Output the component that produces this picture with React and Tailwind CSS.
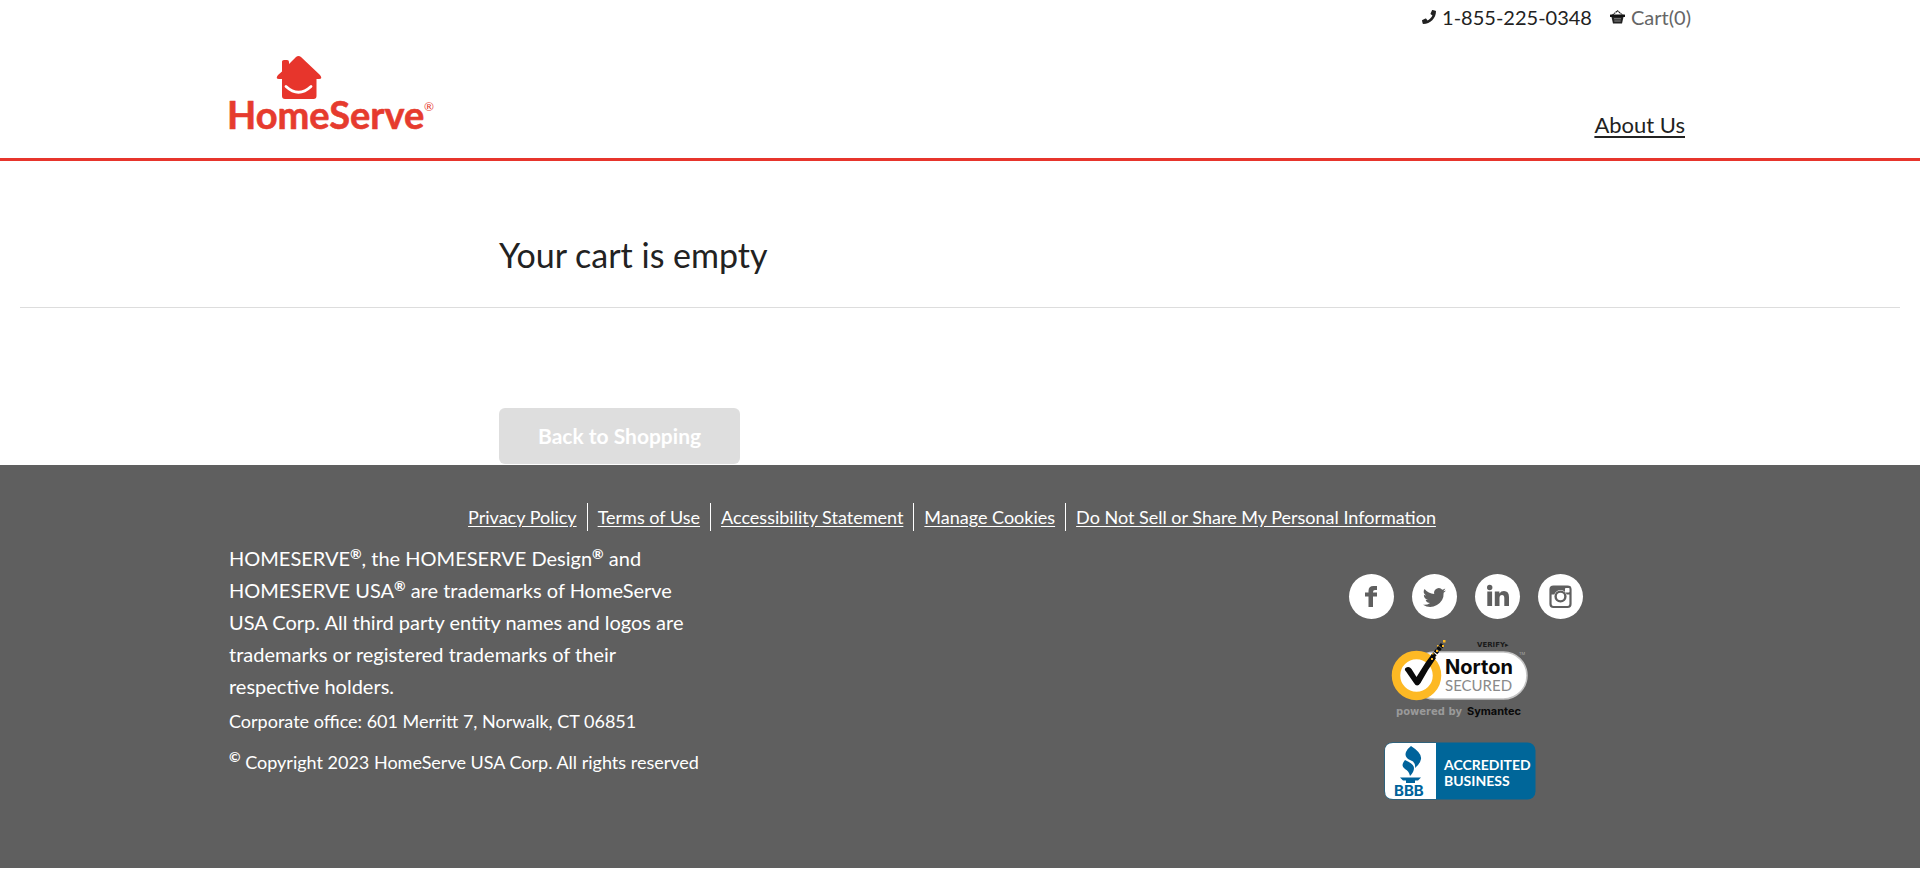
import { FaPhone } from "react-icons/fa";

const footerLinks = [
  "Privacy Policy",
  "Terms of Use",
  "Accessibility Statement",
  "Manage Cookies",
  "Do Not Sell or Share My Personal Information",
];

function Logo() {
  return (
    <svg width="210" height="84" viewBox="-4 0 210 84" role="img" aria-label="HomeServe">
      <path
        d="M53 6.500 Q53 5 55 5 H58 Q60 5 60 7 V9 L67 2 Q69.500 0 72 2 L91 20 Q94 24 90 24 H87.500 V41 Q87.500 44 84.500 44 H56 Q53 44 53 41 V24 H50 Q46 24 49 20 L53 16.500 Z"
        fill="#e7352c"
      />
      <path d="M57 31.500 Q69.500 43 82 31.500" fill="none" stroke="#fff" strokeWidth="2.800" strokeLinecap="round" />
      <text x="-2" y="74" fontFamily="Lato, sans-serif" fontWeight="700" fontSize="38" fill="#e63b2e" stroke="#e63b2e" strokeWidth=".6" strokeLinejoin="round">
        HomeServe
      </text>
      <text x="195" y="56" fontFamily="Lato, sans-serif" fontWeight="400" fontSize="12" fill="#e63b2e">
        ®
      </text>
    </svg>
  );
}

function BasketIcon() {
  return (
    <svg width="15" height="14" viewBox="0 0 15 14" aria-hidden="true">
      <path d="M2.500 5 L7.500 .8 L12.500 5" fill="none" stroke="#222" strokeWidth="1.200" strokeDasharray="1.600 .5" />
      <rect x="0" y="4.500" width="15" height="2.500" rx=".5" fill="#111" />
      <path d="M1.500 7 H13.500 L12 13.500 H3 Z" fill="#222" />
      <path d="M4 8.800 H11 M4.300 11 H10.700" stroke="#999" strokeWidth=".9" />
    </svg>
  );
}

function Facebook() {
  return (
    <svg width="45" height="45" viewBox="0 0 45 45" aria-hidden="true">
      <path d="M19.500 33 V22.500 H16 V18.500 H19.500 V17 Q19.500 12 24.500 12 H28 V16 H26 Q24 16 24 18 V18.500 H28 V22.500 H24 V33 Z" fill="#5f5f5f" />
    </svg>
  );
}

function Twitter() {
  return (
    <svg width="45" height="45" viewBox="0 0 45 45" aria-hidden="true">
      <path
        transform="translate(11 12) scale(.96)"
        d="M23.900 4.600a10 10 0 0 1-2.800.8 5 5 0 0 0 2.100-2.700 10 10 0 0 1-3.100 1.200 4.900 4.900 0 0 0-8.400 4.500A14 14 0 0 1 1.600 3.200a4.900 4.900 0 0 0 1.500 6.600 5 5 0 0 1-2.200-.6 4.900 4.900 0 0 0 4 4.900 5 5 0 0 1-2.200.1 4.900 4.900 0 0 0 4.600 3.400A9.900 9.900 0 0 1 0 19.500 14 14 0 0 0 21.500 7.100a10 10 0 0 0 2.400-2.500z"
        fill="#5f5f5f"
      />
    </svg>
  );
}

function LinkedIn() {
  return (
    <svg width="45" height="45" viewBox="0 0 45 45" aria-hidden="true">
      <circle cx="14.700" cy="13.500" r="2.700" fill="#5f5f5f" />
      <path d="M12.300 17.500 H17.100 V32 H12.300 Z M19.800 17.500 H24.400 V19.400 Q26 17 29 17 Q34 17 34 23 V32 H29.300 V24 Q29.300 21 27 21 Q24.500 21 24.500 24 V32 H19.800 Z" fill="#5f5f5f" />
    </svg>
  );
}

function Instagram() {
  return (
    <svg width="45" height="45" viewBox="0 0 45 45" aria-hidden="true">
      <rect x="12.500" y="12.500" width="20" height="20.500" rx="3" fill="none" stroke="#5f5f5f" strokeWidth="2.200" />
      <path d="M12 14 Q13 12 15 12 H31 Q33 12 33 14 V20.500 H12 Z" fill="#5f5f5f" />
      <rect x="27" y="14" width="4.500" height="4.500" rx=".8" fill="#fff" />
      <circle cx="22.500" cy="22.500" r="6.500" fill="#fff" />
      <circle cx="22.500" cy="22.500" r="4.900" fill="none" stroke="#5f5f5f" strokeWidth="2.400" />
    </svg>
  );
}

const socials = [
  { name: "Facebook", Icon: Facebook },
  { name: "Twitter", Icon: Twitter },
  { name: "LinkedIn", Icon: LinkedIn },
  { name: "Instagram", Icon: Instagram },
];

function NortonSeal() {
  return (
    <svg width="138" height="78" viewBox="0 0 138 78" role="img" aria-label="Norton Secured, powered by Symantec">
      <rect x="20" y="12" width="116" height="47" rx="23.500" fill="#fff" stroke="#c4c4c4" strokeWidth="1.500" />
      <circle cx="25.500" cy="35.500" r="20.500" fill="#fff" stroke="#fdb924" strokeWidth="8.500" />
      <path d="M14.500 28 Q18 25.500 20.500 29 L25.500 37 L35 22 L41 14 L45 18 L37 30 L29.500 43 Q26 48 23 43 L15 31.500 Q13 29.500 14.500 28 Z" fill="#0a0a0a" />
      <path d="M42 16 L52 4" stroke="#0a0a0a" strokeWidth="4.500" strokeDasharray="3 1" />
      <g fill="#fdb924">
        <rect x="52" y="0" width="2.500" height="2.500" />
        <rect x="51" y="5" width="2" height="2" />
        <rect x="46" y="5" width="1.500" height="1.500" />
        <rect x="45" y="10" width="2" height="2" />
        <rect x="41" y="13" width="1.500" height="1.500" />
        <rect x="40" y="18" width="2" height="2" />
      </g>
      <text x="86" y="7" fontFamily="'DejaVu Sans', sans-serif" fontWeight="700" fontSize="7" fill="#1a1a1a">VERIFY▸</text>
      <text x="54" y="34" fontFamily="Inter, sans-serif" fontWeight="700" fontSize="20" fill="#0a0a0a">Norton</text>
      <text x="54" y="51" fontFamily="Lato, sans-serif" fontWeight="400" fontSize="15" fill="#8a8a8a">SECURED</text>
      <text x="128" y="15" fontFamily="Inter, sans-serif" fontSize="4" fill="#aaa">TM</text>
      <text x="5" y="75" fontFamily="'DejaVu Sans', sans-serif" fontWeight="700" fontSize="10" fill="#9a9a9a">powered by</text>
      <text x="76" y="75" fontFamily="Inter, sans-serif" fontWeight="700" fontSize="11" fill="#0a0a0a">Symantec</text>
    </svg>
  );
}

function BbbSeal() {
  return (
    <svg width="152" height="58" viewBox="0 0 152 58" role="img" aria-label="BBB Accredited Business">
      <rect x=".5" y=".5" width="151" height="57" rx="8" fill="#006699" />
      <path d="M52 1 H9 Q1 1 1 9 V49 Q1 57 9 57 H52 Z" fill="#fff" />
      <g fill="#00639b">
        <path d="M27 4 Q38 11 37 17 Q36 22 31 26 Q32 20 26 18 Q20 15 22 10 Q23 7 27 4 Z" />
        <path d="M21 18 Q30 22 30 26 Q30 30 26 34 Q25 29 21 27 Q16 24 21 18 Z" />
        <path d="M16 35.500 H37 L34 38.500 H31 V41 H22 V38.500 H19 Z" />
      </g>
      <text x="10" y="54" fontFamily="Inter, sans-serif" fontWeight="700" fontSize="15" fill="#00639b">BBB</text>
      <text x="60" y="28" fontFamily="Lato, sans-serif" fontWeight="700" fontSize="14" fill="#fff">ACCREDITED</text>
      <text x="60" y="44" fontFamily="Lato, sans-serif" fontWeight="700" fontSize="14" fill="#fff">BUSINESS</text>
    </svg>
  );
}

function Reg() {
  return <sup className="text-sm leading-none font-bold">®</sup>;
}

export default function App() {
  return (
    <div className="bg-white font-['Lato',sans-serif] text-[#222]">
      <header className="border-b-3 border-[#e7352c]">
        <div className="mx-auto flex max-w-[1462px] flex-col">
          <div className="flex h-[34px] items-center justify-end gap-[18px] text-xl">
            <a href="#phone" className="flex items-center gap-1.5">
              <FaPhone className="size-3.5" aria-hidden="true" />
              1-855-225-0348
            </a>
            <a href="#cart" className="flex items-center gap-1.5 text-[#666]">
              <BasketIcon />
              Cart(0)
            </a>
          </div>
          <div className="flex items-end justify-between pt-[21px] pb-[19px]">
            <a href="#home" className="-ml-1">
              <Logo />
            </a>
            <nav className="pr-1.5">
              <a href="#about" className="text-[22px] leading-6 underline underline-offset-3">
                About Us
              </a>
            </nav>
          </div>
        </div>
      </header>

      <main>
        <div className="mx-auto max-w-[922px] pt-[74px] pb-8">
          <h1 className="text-[34px] leading-10">Your cart is empty</h1>
        </div>
        <hr className="mx-5 border-[#ddd]" />
        <div className="mx-auto max-w-[922px] pt-[100px]">
          <button type="button" className="h-14 rounded-md bg-[#dedede] px-[39px] text-[21px] font-bold text-white">
            Back to Shopping
          </button>
        </div>
      </main>

      <footer className="mt-px bg-[#5f5f5f] pt-[38px] pb-[68px] text-white">
        <ul className="mx-auto flex flex-wrap justify-center pr-4 text-lg leading-7">
          {footerLinks.map((label) => (
            <li key={label} className="border-r border-white px-[10px] last:border-r-0">
              <a href="#policy" className="underline underline-offset-2">
                {label}
              </a>
            </li>
          ))}
        </ul>
        <div className="mx-auto flex max-w-[1462px] flex-wrap justify-between">
          <div className="max-w-[480px] pt-[11px]">
            <p className="text-xl leading-8">
              HOMESERVE<Reg />, the HOMESERVE Design<Reg /> and
              <br />
              HOMESERVE USA<Reg /> are trademarks of HomeServe
              <br />
              USA Corp. All third party entity names and logos are
              <br />
              trademarks or registered trademarks of their
              <br />
              respective holders.
            </p>
            <p className="pt-[3px] text-lg leading-8">Corporate office: 601 Merritt 7, Norwalk, CT 06851</p>
            <p className="pt-[9px] text-lg leading-8">
              <sup className="text-sm leading-none font-bold">©</sup> Copyright 2023 HomeServe USA Corp. All rights reserved
            </p>
          </div>
          <div className="flex w-[450px] flex-col items-center pt-[43px]">
            <div className="flex gap-[18px]">
              {socials.map(({ name, Icon }) => (
                <a key={name} href="#social" aria-label={name} className="size-[45px] rounded-full bg-white">
                  <Icon />
                </a>
              ))}
            </div>
            <a href="#norton" className="mt-[21px] mr-3">
              <NortonSeal />
            </a>
            <a href="#bbb" className="mt-6 mr-3">
              <BbbSeal />
            </a>
          </div>
        </div>
      </footer>
    </div>
  );
}
